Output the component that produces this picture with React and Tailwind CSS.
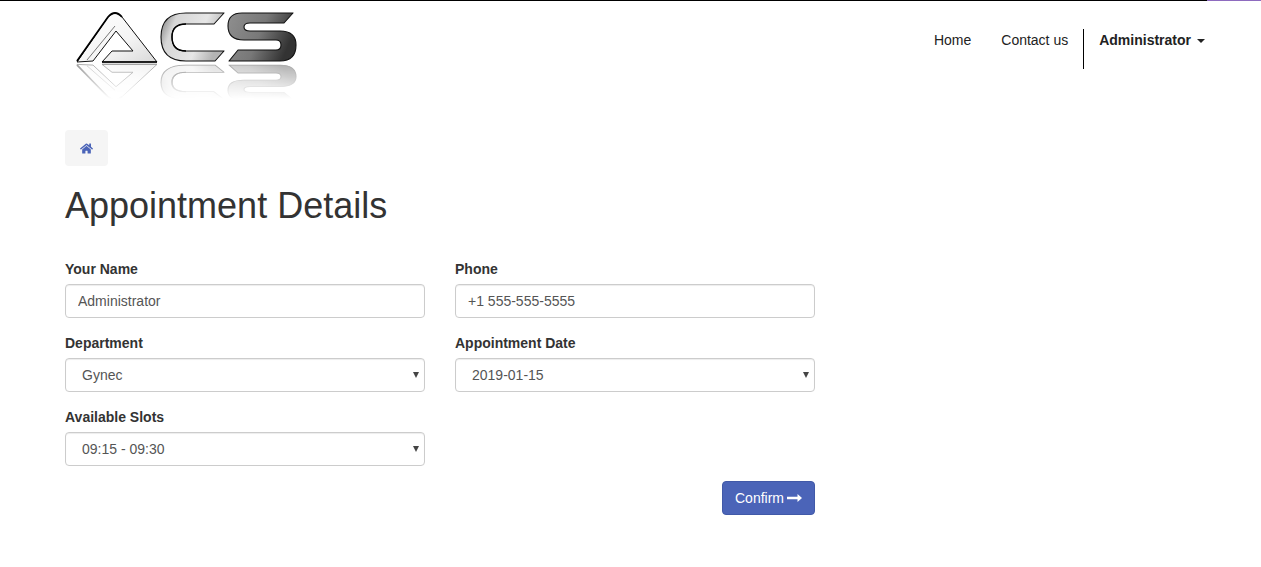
import { FaHome } from "react-icons/fa";

const departments = ["Gynec"];
const dates = ["2019-01-15"];
const slots = ["09:15 - 09:30"];

function Logo() {
  const letters = (
    <>
      <path d="M77 62 L108 17 Q115 9 122 17 L157 62 H102 L112 51 H133 L116 31 L93 61 Z" fill="url(#acsA)" stroke="#111" strokeWidth="1" strokeLinejoin="round" />
      <path d="M77 61 L108 17 Q115 9 122 17" fill="none" stroke="#000" strokeWidth="1.8" />
      <path d="M87 60 L115 26" fill="none" stroke="#555" strokeWidth="0.8" />
      <path d="M102 62 H157" fill="none" stroke="#000" strokeWidth="1.4" />
      <path d="M224 13 H186 Q161 13 161 37 Q161 61 186 61 H215 L224 51 H186 Q172 51 172 37 Q172 24 186 24 H214 Z" fill="url(#acsC)" stroke="#111" strokeWidth="1.1" strokeLinejoin="round" />
      <path d="M186 51 Q172 51 172 37 Q172 24 186 24" fill="none" stroke="#000" strokeWidth="1.4" />
      <path d="M293 13 H242 Q228 13 228 26 Q228 40 244 40 H276 Q281 40 281 45 Q281 50 276 50 H238 L229 61 H280 Q296 61 296 45 Q296 31 280 31 H250 Q244 31 244 27 Q244 23 250 23 H284 Z" fill="url(#acsS)" stroke="#111" strokeWidth="1.1" strokeLinejoin="round" />
    </>
  );
  return (
    <svg width="230" height="92" viewBox="70 8 230 92" className="block">
      <defs>
        <linearGradient id="acsA" x1="0" y1="0" x2="1" y2="1">
          <stop offset="0" stopColor="#ffffff" />
          <stop offset="0.6" stopColor="#f4f4f4" />
          <stop offset="1" stopColor="#d8d8d8" />
        </linearGradient>
        <linearGradient id="acsC" x1="0" y1="0" x2="1" y2="0.3">
          <stop offset="0" stopColor="#777777" />
          <stop offset="0.25" stopColor="#d6d6d6" />
          <stop offset="0.7" stopColor="#e6e6e6" />
          <stop offset="1" stopColor="#b4b4b4" />
        </linearGradient>
        <linearGradient id="acsS" x1="0" y1="0" x2="1" y2="0.3">
          <stop offset="0" stopColor="#8f8f8f" />
          <stop offset="0.55" stopColor="#787878" />
          <stop offset="1" stopColor="#333333" />
        </linearGradient>
        <linearGradient id="acsFade" x1="0" y1="0" x2="0" y2="1">
          <stop offset="0" stopColor="#fff" stopOpacity="0.4" />
          <stop offset="1" stopColor="#fff" stopOpacity="0" />
        </linearGradient>
        <mask id="acsMask" maskUnits="userSpaceOnUse" x="70" y="63" width="230" height="36">
          <rect x="70" y="63" width="230" height="36" fill="url(#acsFade)" />
        </mask>
      </defs>
      {letters}
      <g mask="url(#acsMask)">
        <g transform="translate(0 109) scale(1 -0.72)">{letters}</g>
      </g>
    </svg>
  );
}

function Field({ label, children }) {
  return (
    <div className="w-[360px] mb-[15px]">
      <label className="block mb-[5px] text-sm leading-5 font-bold text-[#333]">{label}</label>
      {children}
    </div>
  );
}

function TextInput({ value }) {
  return (
    <input
      readOnly
      value={value}
      className="block w-full h-[34px] px-3 py-1.5 text-sm text-[#555] bg-white border border-[#ccc] rounded shadow-[inset_0_1px_1px_rgba(0,0,0,0.075)] outline-none"
    />
  );
}

function SelectInput({ options }) {
  return (
    <div className="relative">
      <select className="block w-full h-[34px] pl-4 pr-6 py-1.5 text-sm text-[#555] bg-white border border-[#ccc] rounded shadow-[inset_0_1px_1px_rgba(0,0,0,0.075)] outline-none appearance-none">
        {options.map((o) => (
          <option key={o}>{o}</option>
        ))}
      </select>
      <span className="absolute right-[6px] top-[14px] w-0 h-0 border-x-[3px] border-x-transparent border-t-[6px] border-t-[#444] pointer-events-none" />
    </div>
  );
}

export default function App() {
  return (
    <div className="min-h-[567px] bg-white font-['Liberation_Sans',Arial,sans-serif] text-sm text-[#333]">
      {/* top border */}
      <div className="flex h-px bg-black">
        <div className="flex-1" />
        <div className="w-[54px] bg-[#8e6bbf]" />
      </div>

      {/* navbar */}
      <nav className="flex justify-between h-[99px] pl-[70px] pr-[41px]">
        <div className="pt-[7px]">
          <Logo />
        </div>
        <ul className="flex items-start pt-7 text-sm text-[#222]">
          <li className="px-[15px] leading-[22px]"><a>Home</a></li>
          <li className="px-[15px] leading-[22px]"><a>Contact us</a></li>
          <li className="h-10 border-l border-black pl-[15px] pr-[15px] leading-[22px] font-bold">
            <a className="flex items-center">
              Administrator
              <span className="ml-[6px] mt-px w-0 h-0 border-x-4 border-x-transparent border-t-4 border-t-[#222]" />
            </a>
          </li>
        </ul>
      </nav>

      <main className="px-[65px] pt-[30px]">
        {/* breadcrumb */}
        <div className="flex items-center justify-center w-[43px] h-9 bg-[#f5f5f5] rounded">
          <FaHome size={13} className="text-[#4b64b8]" />
        </div>

        <h1 className="mt-5 mb-[33px] text-4xl leading-10 font-normal text-[#333]">Appointment Details</h1>

        <div className="w-[750px]">
          <div className="grid grid-cols-[360px_360px] gap-x-[30px]">
            <Field label="Your Name"><TextInput value="Administrator" /></Field>
            <Field label="Phone"><TextInput value="+1 555-555-5555" /></Field>
            <Field label="Department"><SelectInput options={departments} /></Field>
            <Field label="Appointment Date"><SelectInput options={dates} /></Field>
            <Field label="Available Slots"><SelectInput options={slots} /></Field>
          </div>
          <div className="flex justify-end">
            <button className="flex items-center gap-[3px] h-[34px] w-[93px] pl-3 text-sm text-white bg-[#4b64b8] border border-[#4159a8] rounded">
              Confirm
              <svg width="15" height="10" viewBox="0 0 15 10">
                <path d="M0 3.8 H10.5 V1 L15 5 L10.5 9 V6.2 H0 Z" fill="currentColor" />
              </svg>
            </button>
          </div>
        </div>
      </main>
    </div>
  );
}
